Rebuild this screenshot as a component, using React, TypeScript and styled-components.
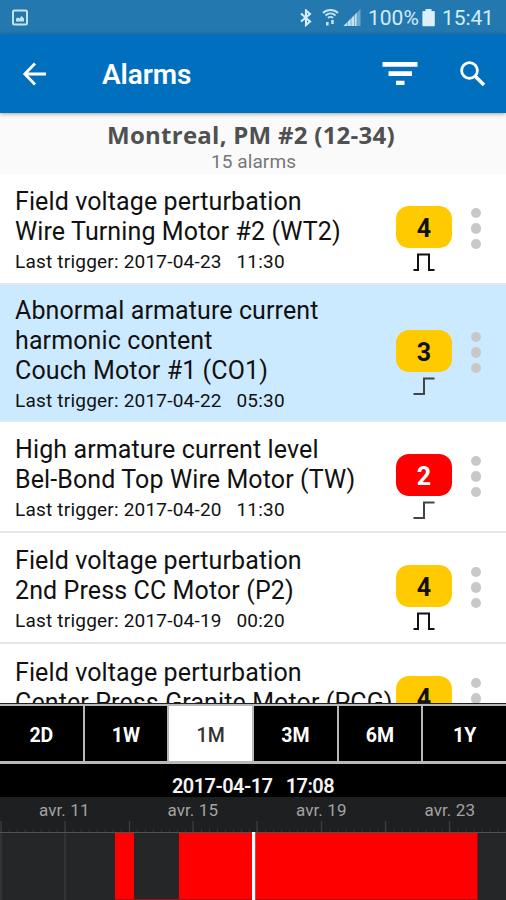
import React from 'react';
import styled, { createGlobalStyle } from 'styled-components';

const GlobalStyle = createGlobalStyle`
  * { box-sizing: border-box; }
  body { margin: 0; background: #fff; font-family: Roboto, sans-serif; }
`;

const Screen = styled.main`
  width: 506px;
  height: 900px;
  display: flex;
  flex-direction: column;
  overflow: hidden;
  background: #fff;
  color: #111;
`;

const StatusBar = styled.header`
  height: 34px;
  flex: none;
  display: flex;
  align-items: center;
  justify-content: space-between;
  padding: 2px 12px 0 11px;
  background: #2478b0;
  color: #d3ecfa;
`;

const StatusGroup = styled.div`
  display: flex;
  align-items: center;
  font-size: 21px;
  line-height: 32px;
`;

const StatusText = styled.span<{ $width: number; $spacing: number }>`
  width: ${p => p.$width}px;
  letter-spacing: ${p => p.$spacing}px;
  white-space: nowrap;
`;

const Icon = styled.svg<{ $gap?: number }>`
  display: block;
  flex: none;
  margin-right: ${p => p.$gap ?? 0}px;
`;

const AppBar = styled.nav`
  height: 79px;
  flex: none;
  display: flex;
  align-items: center;
  padding: 0 20px 0 22px;
  background: #006fbe;
  color: #fff;
  position: relative;
  box-shadow: 0 1px 4px rgba(0, 0, 0, 0.35);
`;

const AppTitle = styled.h1`
  flex: 1;
  margin: 3px 0 0 55px;
  font-size: 28px;
  line-height: 36px;
  font-weight: 600;
  letter-spacing: -0.1px;
`;

const Machine = styled.section`
  height: 61px;
  flex: none;
  display: flex;
  flex-direction: column;
  align-items: center;
  padding: 7px 4px 0 0;
  background: #fafafa;
`;

const MachineName = styled.h2`
  margin: 0;
  font-family: "Open Sans", sans-serif;
  font-size: 24px;
  line-height: 30px;
  font-weight: 700;
  letter-spacing: 0.26px;
  color: #505050;
  white-space: nowrap;
`;

const MachineCount = styled.div`
  padding: 2px 0 0 5px;
  font-size: 19px;
  line-height: 20px;
  letter-spacing: 0.1px;
  color: #777;
`;

const AlarmList = styled.ul`
  flex: 1;
  min-height: 0;
  margin: 0;
  padding: 0;
  list-style: none;
  overflow: hidden;
`;

const AlarmRow = styled.li<{ $selected?: boolean; $height: number }>`
  height: ${p => p.$height}px;
  display: flex;
  padding-left: 15px;
  background: ${p => (p.$selected ? '#cceaff' : '#fff')};
  border-bottom: 2px solid ${p => (p.$selected ? '#dceaf3' : '#e6e6e6')};
`;

const AlarmText = styled.div<{ $top: number }>`
  width: 381px;
  flex: none;
  padding-top: ${p => p.$top}px;
`;

const AlarmLine = styled.div`
  font-size: 25px;
  line-height: 30px;
  letter-spacing: 0.11px;
  white-space: nowrap;
`;

const Trigger = styled.div`
  font-size: 19px;
  line-height: 30px;
  letter-spacing: 0.21px;
  white-space: pre;
`;

const Level = styled.div`
  width: 56px;
  display: flex;
  flex-direction: column;
  align-items: center;
  justify-content: center;
  padding-top: 20px;
`;

const Badge = styled.div<{ $critical?: boolean }>`
  width: 56px;
  height: 42px;
  flex: none;
  margin-bottom: 5px;
  border-radius: 13px;
  background: ${p => (p.$critical ? '#fe0000' : '#ffcb00')};
  color: ${p => (p.$critical ? '#fff' : '#111')};
  font-size: 25px;
  line-height: 46px;
  font-weight: 700;
  text-align: center;
`;

const MoreButton = styled.button`
  width: 48px;
  padding: 0;
  border: 0;
  background: none;
  display: flex;
  flex-direction: column;
  align-items: center;
  justify-content: center;
  gap: 5px;
`;

const Dot = styled.span`
  width: 10.2px;
  height: 10.2px;
  border-radius: 50%;
  background: #c8c8c8;
`;

const RangeTabs = styled.div`
  height: 61px;
  flex: none;
  display: grid;
  grid-template-columns: repeat(6, 1fr);
  gap: 2px;
  padding: 2px 0 3px;
  background: #b9b9b9;
  border-top: 1px solid #222;
`;

const RangeTab = styled.button<{ $active?: boolean }>`
  border: 0;
  padding: 4px 0 0;
  font: ${p => (p.$active ? 500 : 700)} 19.5px/24px Roboto, sans-serif;
  background: ${p => (p.$active ? '#fff' : '#000')};
  color: ${p => (p.$active ? '#333' : '#fff')};
`;

const Cursor = styled.div`
  height: 33px;
  flex: none;
  padding-top: 7px;
  background: #000;
  color: #f4f4f4;
  font-size: 20px;
  line-height: 30px;
  font-weight: 600;
  letter-spacing: -0.55px;
  text-align: center;
  white-space: pre;
`;

const DateScale = styled.div`
  height: 24px;
  flex: none;
  display: grid;
  grid-template-columns: repeat(4, 128.5px);
  background: #1e1f21;
  color: #a3a3a3;
  font-size: 17px;
  line-height: 27px;
  letter-spacing: 0.1px;
  text-align: center;
`;

const Timeline = styled.svg`
  display: block;
  width: 506px;
  height: 79px;
  flex: none;
`;

type Shape = 'pulse' | 'step';
interface Alarm {
  lines: string[];
  trigger?: string;
  level: number;
  shape: Shape;
  selected?: boolean;
  height: number;
  top: number;
}

const alarms: Alarm[] = [
  { lines: ['Field voltage perturbation', 'Wire Turning Motor #2 (WT2)'], trigger: '2017-04-23   11:30', level: 4, shape: 'pulse', height: 111, top: 13 },
  { lines: ['Abnormal armature current', 'harmonic content', 'Couch Motor #1 (CO1)'], trigger: '2017-04-22   05:30', level: 3, shape: 'step', selected: true, height: 137, top: 11 },
  { lines: ['High armature current level', 'Bel-Bond Top Wire Motor (TW)'], trigger: '2017-04-20   11:30', level: 2, shape: 'step', height: 111, top: 13 },
  { lines: ['Field voltage perturbation', '2nd Press CC Motor (P2)'], trigger: '2017-04-19   00:20', level: 4, shape: 'pulse', height: 111, top: 13 },
  { lines: ['Field voltage perturbation', 'Center Press Granite Motor (PCG)'], level: 4, shape: 'pulse', height: 111, top: 14 },
];

const ranges = ['2D', '1W', '1M', '3M', '6M', '1Y'];
const ticks = [1, 65, 129.5, 193, 257, 321.5, 385.5, 449.5];
const minorTicks = Array.from({ length: 64 }, (_, i) => 1 + i * 8.02);

const SignalIcon = ({ shape }: { shape: Shape }) => (
  <Icon width="22" height="19" viewBox="0 0 22 19" fill="none" stroke={shape === 'pulse' ? '#111' : '#444'} strokeWidth="2">
    <path d={shape === 'pulse' ? 'M0.5 17H5V1.5H16V17H21.5' : 'M0.5 17H11V1.5H21.5'} />
  </Icon>
);

export default function App() {
  return (
    <Screen>
      <GlobalStyle />
      <StatusBar>
        <Icon width="18" height="18" viewBox="0 0 18 18">
          <rect x="2" y="1.5" width="14" height="14" rx="1.5" fill="none" stroke="#c4e4f4" strokeWidth="2" />
          <path d="M5 12.5V9.5l2-1 1.5 1 2-2.5L13 9.5v3Z" fill="#c4e4f4" />
        </Icon>
        <StatusGroup>
          <Icon $gap={9} width="14" height="18" viewBox="0 0 14 18" fill="none" stroke="#d3ecfa" strokeWidth="2.1">
            <path d="M2 4.5l9 8L7 16V1.5L11 5 2 12.5" />
          </Icon>
          <Icon $gap={4} width="17" height="18" viewBox="0 0 17 18" fill="none" stroke="#c4e4f4" strokeWidth="1.9">
            <path d="M1 4C5 0 12 0 16 4M3.5 6.5C6.5 3.7 10.5 3.7 13.5 6.5M6 9c1.5-1.5 3.5-1.500 5 0" />
            <path d="M5.3 16.5v-3.5M10.5 11v4" strokeWidth="2.6" />
          </Icon>
          <Icon $gap={7} width="18" height="18" viewBox="0 0 18 18">
            <path d="M17.5 0V17H0.5Z" fill="#6ba9cd" />
            <path d="M13.5 4V17H0.5Z" fill="#c4e4f4" />
            <path d="M4.5 9v9M8 6v12M11.5 3v15" stroke="#2478b0" strokeWidth="0.5" />
          </Icon>
          <StatusText $width={54} $spacing={0}>100%</StatusText>
          <Icon $gap={7} width="13" height="18" viewBox="0 0 13 18" fill="#d9f0f8">
            <path d="M3.5 0h6v2H12a.8.8 0 0 1 .8.8V16.5a.8.8 0 0 1-.8.8H1.2a.8.8 0 0 1-.8-.8V2.8a.8.8 0 0 1 .8-.8h2.3Z" />
          </Icon>
          <StatusText $width={52} $spacing={-0.1}>15:41</StatusText>
        </StatusGroup>
      </StatusBar>

      <AppBar>
        <Icon width="25" height="24" viewBox="0 0 25 24" fill="none" stroke="#fff" strokeWidth="2.8">
          <path d="M24 12H3M13 1.5L2.8 12 13 22.5" />
        </Icon>
        <AppTitle>Alarms</AppTitle>
        <Icon $gap={41} width="36" height="24" viewBox="0 0 36 24" fill="#fff">
          <path d="M0.5 0H35.5V4.7H0.5ZM6.5 9.2H30V13.9H6.5ZM14 18.7H22.5V23.1H14Z" />
        </Icon>
        <Icon width="27" height="26" viewBox="0 0 27 26" fill="none" stroke="#fff">
          <circle cx="10.5" cy="9.5" r="7.9" strokeWidth="2.8" />
          <path d="M16 15L25 24" strokeWidth="3.6" />
        </Icon>
      </AppBar>

      <Machine>
        <MachineName>Montreal, PM #2 (12-34)</MachineName>
        <MachineCount>15 alarms</MachineCount>
      </Machine>

      <AlarmList>
        {alarms.map((alarm, i) => (
          <AlarmRow key={i} $selected={alarm.selected} $height={alarm.height}>
            <AlarmText $top={alarm.top}>
              {alarm.lines.map(line => <AlarmLine key={line}>{line}</AlarmLine>)}
              {alarm.trigger && <Trigger>Last trigger: {alarm.trigger}</Trigger>}
            </AlarmText>
            <Level>
              <Badge $critical={alarm.level === 2}>{alarm.level}</Badge>
              <SignalIcon shape={alarm.shape} />
            </Level>
            <MoreButton aria-label="More"><Dot /><Dot /><Dot /></MoreButton>
          </AlarmRow>
        ))}
      </AlarmList>

      <RangeTabs>
        {ranges.map(range => <RangeTab key={range} $active={range === '1M'}>{range}</RangeTab>)}
      </RangeTabs>
      <Cursor>2017-04-17   17:08</Cursor>
      <DateScale>
        {['avr. 11', 'avr. 15', 'avr. 19', 'avr. 23'].map(date => <span key={date}>{date}</span>)}
      </DateScale>
      <Timeline viewBox="0 0 506 79">
        <rect width="506" height="79" fill="#1e1f21" />
        <rect y="11" width="506" height="68" fill="#242628" />
        {minorTicks.map(x => <path key={x} d={`M${x} 8V11`} stroke="#333537" strokeWidth="1" />)}
        {ticks.map(x => <path key={x} d={`M${x} 0V79`} stroke="#3a3c3e" strokeWidth="1.3" />)}
        <path d="M0 11.5H506" stroke="#505254" />
        <rect x="115" y="12" width="19" height="67" fill="#fe0000" />
        <rect x="179" y="12" width="298.5" height="67" fill="#fe0000" />
        <path d="M115 78.5H478" stroke="#a51216" />
        <rect x="252" y="11" width="3.2" height="68" fill="#fff" />
      </Timeline>
    </Screen>
  );
}
